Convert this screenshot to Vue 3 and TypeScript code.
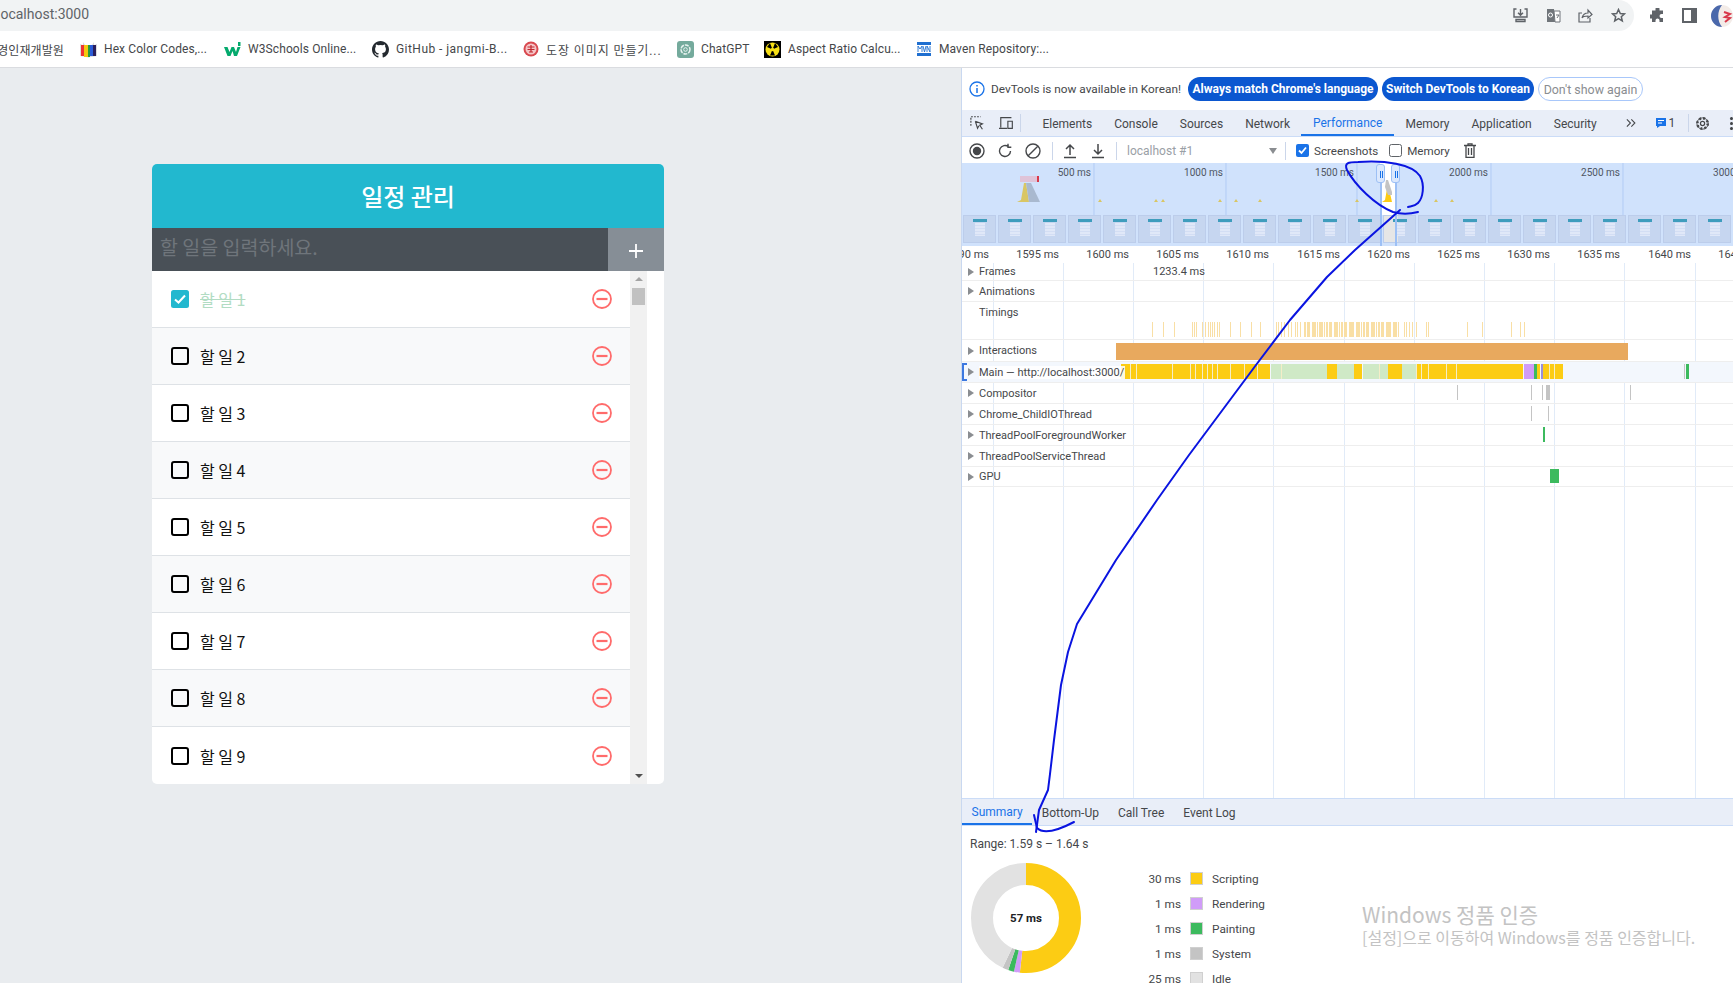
<template>
  <div class="screen">
    <header class="topbar">
      <div class="address">
        <span class="url">localhost:3000</span>
        <div class="addr-icons">
          <svg width="15" height="15" viewBox="0 0 15 15" fill="none" stroke="#5f6368" stroke-width="1.4"><path d="M3.5 1H1v8h13V1h-2.500M7.500 1v6M5 4.800l2.500 2.500L10 4.800M3 11.500h9v2H3z" /></svg>
          <svg width="15" height="15" viewBox="0 0 15 15"><path d="M1 1h7l1 13H1z" fill="#70757a" /><path d="M8 3h6v11H9z" fill="#fff" stroke="#70757a" /><circle cx="4.500" cy="7" r="2" fill="none" stroke="#fff" /><path d="M10 7h3M11 10l2-3" stroke="#70757a" /></svg>
          <svg width="15" height="15" viewBox="0 0 15 15" fill="none" stroke="#5f6368" stroke-width="1.200"><path d="M4 10c1-4 4-5 6-5V2l4 4.500L10 10V8c-3 0-5 0-6 2zM12 10v4H1V5h3" /></svg>
          <svg width="15" height="15" viewBox="0 0 15 15" fill="none" stroke="#5f6368" stroke-width="1.500"><path d="M7.500 1.500l1.800 4 4.200.4-3.200 2.800 1 4.300-3.800-2.300-3.800 2.300 1-4.300L1.500 5.900l4.200-.4z" /></svg>
        </div>
      </div>
      <div class="chrome-icons">
        <svg width="15" height="15" viewBox="0 0 15 15"><path d="M5.500 1a2 2 0 0 1 4 0v1.500H13V6h-1.500a2 2 0 0 0 0 4H13v4H9.500v-1.500a2 2 0 0 0-4 0V14H2v-3.500H.500a2 2 0 0 1 0-4H2v-4h3.500z" fill="#5f6368" /></svg>
        <svg width="15" height="15" viewBox="0 0 15 15" fill="none"><path d="M1 1h13v13H1z" stroke="#5f6368" stroke-width="2" /><path d="M9 1h5v13H9z" fill="#5f6368" /></svg>
        <svg class="avatar" width="22" height="22" viewBox="0 0 22 22"><circle cx="11" cy="11" r="11" fill="#f3ece8" /><path d="M11 0A11 11 0 0 0 11 22C6 16 6 6 11 0z" fill="#4a68ab" /><path d="M13 7l6 2-5 3 5 1-5 4" fill="none" stroke="#d8384a" stroke-width="2" /></svg>
      </div>
    </header>

    <nav class="bookmarks">
      <span class="bm bm-first">경인재개발원</span>
      <span v-for="b in bookmarks" :key="b.name" class="bm" :style="{ width: b.width + 'px' }">
        <svg v-if="b.icon === 'hex'" width="17" height="17" viewBox="0 0 17 17"><path d="M0 3l3 1V1l2 3h7l2-3v3l3-1v12l-8.500 1.500L0 15z" fill="#ddd" /><path d="M1 4h3v11H1z" fill="#e33" /><path d="M4 4h4v12H4z" fill="#f6c90e" /><path d="M8 4h2v12H8z" fill="#2a9d3d" /><path d="M10 4h3v11h-3z" fill="#2b5cd8" /><path d="M13 4h3v11h-3z" fill="#2a1e5c" /></svg>
        <svg v-else-if="b.icon === 'w3'" width="17" height="17" viewBox="0 0 17 17"><path d="M0 6h3.500l2 5 2-5h2.500l2 5 1.500-5h3l-3.500 9h-3L8.500 10 6.500 15h-3z" fill="#04aa6d" /><path d="M14 1h2.500v4H14z" fill="#04aa6d" /></svg>
        <svg v-else-if="b.icon === 'gh'" width="17" height="17" viewBox="0 0 16 16"><path fill="#24292f" d="M8 0C3.600 0 0 3.600 0 8c0 3.500 2.300 6.500 5.500 7.600.4.100.5-.2.500-.4v-1.400c-2.200.5-2.700-1-2.700-1-.4-.9-.9-1.200-.9-1.200-.7-.5.100-.5.100-.5.800.100 1.200.8 1.200.8.700 1.200 1.900.9 2.300.7.100-.5.300-.9.500-1.100-1.800-.2-3.600-.9-3.600-4 0-.9.300-1.600.8-2.100-.1-.2-.4-1 .1-2.100 0 0 .7-.2 2.200.8a7.600 7.600 0 0 1 4 0c1.500-1 2.200-.8 2.200-.8.400 1.100.2 1.900.1 2.100.5.600.8 1.300.8 2.100 0 3.100-1.900 3.700-3.700 3.900.3.300.6.700.6 1.500v2.200c0 .2.100.5.600.4A8 8 0 0 0 16 8c0-4.400-3.600-8-8-8z" /></svg>
        <svg v-else-if="b.icon === 'stamp'" width="16" height="16" viewBox="0 0 16 16"><circle cx="8" cy="8" r="7.500" fill="#d9494f" /><circle cx="8" cy="8" r="5.500" fill="#f5c6c8" /><path d="M4.500 6h7M4.500 8.500h7M6 11h4M8 4v7" stroke="#c0272d" stroke-width="1.200" /></svg>
        <svg v-else-if="b.icon === 'gpt'" width="17" height="17" viewBox="0 0 17 17"><rect width="17" height="17" rx="3" fill="#74aa9c" /><circle cx="8.500" cy="8.500" r="4.500" fill="none" stroke="#e8f3f0" stroke-width="1.500" stroke-dasharray="4 1" /><circle cx="8.500" cy="8.500" r="1.800" fill="none" stroke="#e8f3f0" /></svg>
        <svg v-else-if="b.icon === 'aspect'" width="17" height="17" viewBox="0 0 17 17"><rect width="17" height="17" fill="#000" /><circle cx="8.500" cy="8.500" r="7" fill="#f7e016" /><path d="M8.500 8.500L3 6l3-4zM8.500 8.500L14 6l-3-4zM8.500 8.500l-2.500 6h5z" fill="#000" /><circle cx="8.500" cy="8.500" r="1.800" fill="#f7e016" /></svg>
        <svg v-else width="16" height="16" viewBox="0 0 16 16"><path d="M1 1h14v3H1zM1 12h14v3H1z" fill="#1f6fd0" /><path d="M2 11V5l2 3 2-3v6M7 5l1.500 6L10 5M11 11V5l3 6V5" fill="none" stroke="#1f6fd0" stroke-width=".9" /></svg>
        <span class="bm-text" :class="{ loose: b.icon === 'gh', looser: b.icon === 'stamp' }">{{ b.name }}</span>
      </span>
    </nav>

    <div class="body">
      <main class="page">
        <section class="card">
          <h1 class="card-title">일정 관리</h1>
          <form class="card-form" @submit.prevent>
            <input type="text" placeholder="할 일을 입력하세요." />
            <button type="submit" aria-label="추가">
              <svg width="14" height="14" viewBox="0 0 14 14"><path d="M7 0v14M0 7h14" stroke="#fff" stroke-width="1.800" /></svg>
            </button>
          </form>
          <div class="card-list">
            <ul>
              <li v-for="(t, i) in todos" :key="t" :class="{ odd: i % 2 === 1 }">
                <svg v-if="i === 0" width="18" height="18" viewBox="0 0 18 18"><rect width="18" height="18" rx="2.500" fill="#22b8cf" /><path d="M4 9.500l3.500 3L14 5.500" fill="none" stroke="#fff" stroke-width="2" /></svg>
                <svg v-else width="18" height="18" viewBox="0 0 18 18"><rect x="1" y="1" width="16" height="16" rx="2" fill="none" stroke="#000" stroke-width="2" /></svg>
                <span class="todo-text" :class="{ done: i === 0 }">{{ t }}</span>
                <svg width="20" height="20" viewBox="0 0 20 20" fill="none" stroke="#ff6b6b"><circle cx="10" cy="10" r="9" stroke-width="1.800" /><path d="M4.500 10h11" stroke-width="2.200" /></svg>
              </li>
            </ul>
            <div class="scrollbar">
              <i class="arrow up"></i>
              <i class="thumb"></i>
              <i class="grow"></i>
              <i class="arrow down"></i>
            </div>
          </div>
        </section>
      </main>

      <aside class="devtools">
        <div class="infobar">
          <svg width="16" height="16" viewBox="0 0 16 16" fill="none"><circle cx="8" cy="8" r="7" stroke="#1a73e8" stroke-width="1.300" /><path d="M8 7v5M8 4v1.600" stroke="#1a73e8" stroke-width="1.500" /></svg>
          <span class="info-text">DevTools is now available in Korean!</span>
          <button class="pill solid p1">Always match Chrome's language</button>
          <button class="pill solid p2">Switch DevTools to Korean</button>
          <button class="pill ghost">Don't show again</button>
        </div>

        <div class="tabs">
          <svg width="16" height="16" viewBox="0 0 16 16" fill="none" stroke="#45474a" stroke-width="1.300"><path d="M1 11V1h11" stroke-dasharray="2 1.400" /><path d="M6 6l8 3-3 1.500L14 15M6 6l2.500 8 1.500-3" /></svg>
          <svg class="ic2" width="16" height="16" viewBox="0 0 16 16" fill="none" stroke="#45474a" stroke-width="1.300"><path d="M2 13V2h12M0 14h9M10 6h5v8h-5z" /></svg>
          <span class="sep tabsep"></span>
          <span v-for="t in tabs" :key="t" class="tab" :class="{ active: t === 'Performance' }">{{ t }}</span>
          <svg class="more" width="11" height="10" viewBox="0 0 11 10" fill="none" stroke="#45474a" stroke-width="1.200"><path d="M1 1l4 4-4 4M6 1l4 4-4 4" /></svg>
          <span class="issues"><svg width="10" height="12" viewBox="0 0 10 12"><path d="M0 1h10v8H4l-3 2V9H0z" fill="#1a73e8" /><path d="M2 3.500h6M2 6h4" stroke="#fff" /></svg> 1</span>
          <span class="sep gearsep"></span>
          <svg class="gear" width="17" height="17" viewBox="0 0 16 16" fill="none" stroke="#45474a"><circle cx="8" cy="8" r="2.200" stroke-width="1.300" /><circle cx="8" cy="8" r="5.500" stroke-width="2.600" stroke-dasharray="2.200 2.100" /><circle cx="8" cy="8" r="6" stroke-width="1" /></svg>
          <span class="dots"></span>
        </div>

        <div class="toolbar">
          <svg width="16" height="16" viewBox="0 0 16 16" fill="none"><circle cx="8" cy="8" r="7" stroke="#45474a" stroke-width="1.400" /><circle cx="8" cy="8" r="4.200" fill="#45474a" /></svg>
          <svg class="gap12" width="16" height="16" viewBox="0 0 16 16" fill="none" stroke="#45474a" stroke-width="1.400"><path d="M13.500 8a5.500 5.500 0 1 1-2-4.300M11 .800v3.400h3.300" /></svg>
          <svg class="gap12" width="16" height="16" viewBox="0 0 16 16" fill="none" stroke="#45474a" stroke-width="1.400"><circle cx="8" cy="8" r="7" /><path d="M3.200 12.800l9.600-9.600" /></svg>
          <span class="sep s1"></span>
          <svg class="gap12up" width="14" height="16" viewBox="0 0 14 16" fill="none" stroke="#45474a" stroke-width="1.500"><path d="M7 12V2M3 6l4-4 4 4M1 14.500h12" /></svg>
          <svg class="gap14" width="14" height="16" viewBox="0 0 14 16" fill="none" stroke="#45474a" stroke-width="1.500"><path d="M7 1v10M3 7l4 4 4-4M1 14.500h12" /></svg>
          <span class="sep s2"></span>
          <span class="target">localhost #1</span>
          <i class="target-arrow"></i>
          <span class="sep s3"></span>
          <svg class="chk" width="13" height="13" viewBox="0 0 13 13"><rect width="13" height="13" rx="2" fill="#1a73e8" /><path d="M3 6.500l2.500 2.500L10 3.500" fill="none" stroke="#fff" stroke-width="1.800" /></svg>
          <span class="chk-label">Screenshots</span>
          <svg class="chk c2" width="13" height="13" viewBox="0 0 13 13"><rect x=".500" y=".500" width="12" height="12" rx="2" fill="#fff" stroke="#5f6368" /></svg>
          <span class="chk-label">Memory</span>
          <svg class="trash" width="12" height="15" viewBox="0 0 12 15" fill="none" stroke="#45474a" stroke-width="1.300"><path d="M0 2.500h12M4 2.500V.800h4v1.700M2 2.500h8v11.800H2zM4.500 5v7M7.500 5v7" /></svg>
        </div>

        <div class="overview">
          <svg class="ov-graph" width="771" height="52" viewBox="0 0 771 52">
            <g v-for="o in ovTicks" :key="o.label">
              <path :d="`M${o.x} 0V83`" stroke="#b1cbf5" />
              <text :x="o.x - 3" y="13" text-anchor="end">{{ o.label }}</text>
            </g>
            <rect x="418" y="0" width="16" height="52" fill="#fff" />
            <path d="M58 13h17v6H58z" fill="#dfc3d8" />
            <path d="M75 13h2v6h-2z" fill="#d8384a" />
            <path d="M55 39l4-2 3-17h2l3 19z" fill="#d9c664" />
            <path d="M64 20h5l9 19H67z" fill="#a9b9cf" />
            <path d="M420 39l3-2 2-11h2l3 13z" fill="#fdcb14" />
            <path d="M423 24l1-7h2l4 12v3h-4z" fill="#c4c4c4" />
            <path v-for="b in ovBumps" :key="b" :d="`M${b - 2} 39l2-3 2 3z`" fill="#d9c664" />
          </svg>
          <div class="ov-strip">
            <div v-for="n in 22" :key="n" class="frame" :class="{ sel: n === 13 }">
              <i class="thumb-head"></i>
              <i class="thumb-body"></i>
            </div>
          </div>
          <i class="edge left"></i>
          <i class="edge right"></i>
          <span class="handle h1"></span>
          <span class="handle h2"></span>
        </div>

        <div class="ruler">
          <span v-for="r in rulerTicks" :key="r.label" class="rtick" :style="{ left: r.x + 'px' }">{{ r.label }}</span>
        </div>

        <div class="tracks">
          <i v-for="r in rulerTicks" :key="r.x" class="vline" :style="{ left: r.x + 'px' }"></i>

          <div class="track h18"><i class="tri"></i>Frames<span class="frame-time">1233.4 ms</span></div>
          <div class="track h21"><i class="tri"></i>Animations</div>
          <div class="track timings">
            Timings
            <i v-for="(m, i) in timingMarks" :key="i" class="mark tm" :style="{ left: m.x + 'px', width: m.w + 'px' }"></i>
          </div>
          <div class="track h22"><i class="tri"></i>Interactions<i class="interaction"></i></div>
          <div class="track h21 main-row">
            <i class="bracket"></i>
            <i v-for="(s, i) in mainSegments" :key="i" class="mark ms" :style="{ left: s.x + 'px', width: s.w + 'px', background: s.c }"></i>
            <i class="tri"></i><span class="main-label">Main — http://localhost:3000/</span>
          </div>
          <div class="track h21"><i class="tri"></i>Compositor
            <i v-for="s in compositor" :key="s.x" class="mark ms" :style="{ left: s.x + 'px', width: s.w + 'px', background: '#c4c4c4' }"></i>
          </div>
          <div class="track h21"><i class="tri"></i>Chrome_ChildIOThread
            <i class="mark ms tick-a"></i>
            <i class="mark ms tick-b"></i>
          </div>
          <div class="track h21"><i class="tri"></i>ThreadPoolForegroundWorker
            <i class="mark ms tick-w"></i>
          </div>
          <div class="track h21"><i class="tri"></i>ThreadPoolServiceThread</div>
          <div class="track h20"><i class="tri"></i>GPU
            <i class="mark ms tick-g"></i>
          </div>
        </div>

        <div class="bottom-tabs">
          <span v-for="t in bottomTabs" :key="t" class="btab" :class="{ active: t === 'Summary' }">{{ t }}</span>
        </div>

        <div class="summary">
          <div class="range">Range: 1.59 s – 1.64 s</div>
          <div class="summary-body">
            <div class="donut">
              <svg width="110" height="110" viewBox="0 0 110 110">
                <circle
                  v-for="s in donut"
                  :key="s.label"
                  cx="55"
                  cy="55"
                  r="44"
                  fill="none"
                  :stroke="s.color"
                  stroke-width="22"
                  :stroke-dasharray="s.dash"
                  :stroke-dashoffset="s.offset"
                  transform="rotate(-90 55 55)"
                />
              </svg>
              <b>57 ms</b>
            </div>
            <dl class="legend">
              <div v-for="s in legend" :key="s.label" class="legend-row">
                <dt>{{ s.ms }} ms</dt>
                <i :style="{ background: s.color }"></i>
                <dd>{{ s.label }}</dd>
              </div>
            </dl>
          </div>
        </div>
      </aside>
    </div>

    <div class="watermark">
      <div class="wm-title">Windows 정품 인증</div>
      <div class="wm-sub">[설정]으로 이동하여 Windows를 정품 인증합니다.</div>
    </div>

    <svg class="scribble" width="1733" height="983" viewBox="0 0 1733 983" fill="none" stroke="#0a14e0" stroke-width="2" stroke-linecap="round" stroke-linejoin="round">
      <path d="M1418 212C1410 214 1400 214 1393 212C1375 205 1355 185 1347 170C1344 163 1348 162 1358 162C1385 160 1412 164 1420 176C1425 185 1423 198 1418 203C1415 206 1412 206 1408 207" />
      <path d="M1400 210L1355 250L1327 277L1290 320L1256 365L1224 408L1189 455L1157 500L1116 560L1077 624L1068 652L1061 685L1054 740L1050 774L1048 790L1039 810L1036 832" />
      <path d="M1034 815L1037 828C1043 834 1055 832 1074 822" />
    </svg>
  </div>
</template>

<script setup lang="ts">
interface Bookmark {
  name: string
  icon: string
  width: number
}

interface Slice {
  label: string
  ms: number
  color: string
}

const bookmarks: Bookmark[] = [
  { name: 'Hex Color Codes,...', icon: 'hex', width: 144 },
  { name: 'W3Schools Online...', icon: 'w3', width: 148 },
  { name: 'GitHub - jangmi-B...', icon: 'gh', width: 151 },
  { name: '도장 이미지 만들기...', icon: 'stamp', width: 154 },
  { name: 'ChatGPT', icon: 'gpt', width: 87 },
  { name: 'Aspect Ratio Calcu...', icon: 'aspect', width: 152 },
  { name: 'Maven Repository:...', icon: 'mvn', width: 140 }
]

const todos = Array.from({ length: 9 }, (_, i) => `할 일 ${i + 1}`)

const tabs = ['Elements', 'Console', 'Sources', 'Network', 'Performance', 'Memory', 'Application', 'Security']
const bottomTabs = ['Summary', 'Bottom-Up', 'Call Tree', 'Event Log']

const ovTicks = [
  { x: 132, label: '500 ms' },
  { x: 264, label: '1000 ms' },
  { x: 395, label: '1500 ms' },
  { x: 529, label: '2000 ms' },
  { x: 661, label: '2500 ms' },
  { x: 793, label: '3000 ms' }
]
const ovBumps = [138, 194, 201, 258, 274, 298, 395, 474, 490]

const rulerTicks = Array.from({ length: 12 }, (_, i) => ({
  x: Math.round(30.5 + i * 70.2),
  label: `${1590 + i * 5} ms`
}))

// zoomed reference coordinates -> px inside the devtools pane
const zx = (v: number) => Math.round(v / 2.028 - 2)

const singleTimings = [
  389, 412, 433, 471, 474, 478, 490, 497, 503, 507, 511, 515, 522, 526, 548, 568, 590, 609, 641, 645, 650, 658, 665, 672, 680, 684, 690
]
const timingMarks = singleTimings.map((x) => ({ x: zx(x), w: 1 }))
// the dense stretch in the middle of the track
for (let x = 698; x < 890; x += 5) {
  timingMarks.push({ x: zx(x), w: x % 3 === 0 ? 1 : 2 })
}
for (const x of [900, 905, 910, 916, 924, 945, 950, 1028, 1058, 1118, 1135, 1143]) {
  timingMarks.push({ x: zx(x), w: 1 })
}

const yellow = '#fccc14'
const pale = '#cfe9c6'
const mainSegments = [
  [327, 630, yellow], [630, 745, pale], [745, 765, yellow], [765, 800, pale], [800, 817, yellow], [817, 868, pale],
  [868, 897, yellow], [897, 925, pale], [925, 1143, yellow], [1143, 1165, '#d09cf8'], [1165, 1171, '#3cba5e'],
  [1171, 1178, yellow], [1178, 1183, '#9a8fd8'], [1183, 1223, yellow], [1468, 1471, '#c4c4c4'], [1472, 1478, '#3cba5e']
].map(([a, b, c]) => ({ x: zx(a as number), w: ((b as number) - (a as number)) / 2.028, c: c as string }))
  .concat(
    [345, 356, 430, 466, 476, 490, 500, 512, 522, 548, 575, 602, 650, 850, 925, 935, 950, 985, 1005, 1195, 1205].map((v) => ({
      x: zx(v),
      w: 1,
      c: '#f5edc8'
    }))
  )

const compositor = [
  { x: 495, w: 1 },
  { x: 569, w: 1 },
  { x: 580, w: 1 },
  { x: 584, w: 4 },
  { x: 668, w: 1 }
]

const legend: Slice[] = [
  { label: 'Scripting', ms: 30, color: '#fccc14' },
  { label: 'Rendering', ms: 1, color: '#d09cf8' },
  { label: 'Painting', ms: 1, color: '#3cba5e' },
  { label: 'System', ms: 1, color: '#c4c4c4' },
  { label: 'Idle', ms: 25, color: '#e2e2e2' }
]

const circumference = 2 * Math.PI * 44
const totalMs = legend.reduce((sum, s) => sum + s.ms, 0)
let used = 0
const donut = legend.map((s) => {
  const len = (s.ms / totalMs) * circumference
  const slice = { ...s, dash: `${len} ${circumference - len}`, offset: -used }
  used += len
  return slice
})
</script>

<style scoped>
.screen {
  position: relative;
  width: 1733px;
  height: 983px;
  overflow: hidden;
  display: flex;
  flex-direction: column;
  background: #fff;
  font-family: Roboto, "Noto Sans CJK KR", sans-serif;
}

.topbar {
  display: flex;
  height: 31px;
  flex: none;
}

.address {
  width: 1635px;
  display: flex;
  align-items: center;
  justify-content: space-between;
  background: #f1f3f4;
  border-radius: 0 16px 16px 0;
  padding: 0 8.500px 0 0;
  box-sizing: border-box;
}

.url {
  margin: -4px 0 0 -3px;
  font-size: 14px;
  color: #5f6368;
}

.addr-icons {
  display: flex;
  gap: 17.500px;
}

.chrome-icons {
  flex: 1;
  display: flex;
  align-items: center;
  padding-left: 16px;
  gap: 17px;
}

.avatar {
  margin-left: -3px;
}

.bookmarks {
  height: 37px;
  flex: none;
  display: flex;
  align-items: center;
  border-bottom: 1px solid #dadce0;
  box-sizing: border-box;
  background: #fff;
  white-space: nowrap;
}

.bm {
  display: flex;
  align-items: center;
  gap: 7px;
  font-size: 12px;
  letter-spacing: 0.1px;
  color: #45474a;
  flex: none;
  box-sizing: border-box;
}

.bm-first {
  width: 80px;
  padding-right: 16px;
  justify-content: flex-end;
  font-family: "Noto Sans CJK KR", sans-serif;
}

.bm-text {
  font-family: Roboto, "Noto Sans CJK KR", sans-serif;
}

.bm-text.loose {
  letter-spacing: 0.45px;
}

.bm-text.looser {
  letter-spacing: 0.9px;
}

.body {
  flex: 1;
  display: flex;
  min-height: 0;
}

.page {
  width: 961px;
  flex: none;
  background: #e9ecef;
  padding: 96px 0 0 152px;
  box-sizing: border-box;
}

.card {
  width: 512px;
  background: #fff;
  border-radius: 5px;
  overflow: hidden;
  font-family: "Noto Sans CJK KR", sans-serif;
}

.card-title {
  margin: 0;
  height: 64px;
  line-height: 64px;
  text-align: center;
  background: #22b8cf;
  color: #fff;
  font-size: 24px;
  font-weight: 500;
}

.card-form {
  display: flex;
  height: 43px;
  background: #495057;
}

.card-form input {
  flex: 1;
  min-width: 0;
  border: none;
  outline: none;
  background: transparent;
  padding: 0 8px 6px;
  font-family: inherit;
  font-size: 19.500px;
  color: #fff;
}

.card-form input::placeholder {
  color: #6f757b;
}

.card-form button {
  width: 56px;
  border: none;
  background: #868e96;
  display: flex;
  align-items: center;
  justify-content: center;
  padding: 2px 0 0;
}

.card-list {
  display: flex;
  height: 513px;
  padding-right: 17px;
}

.card-list ul {
  flex: 1;
  margin: 0;
  padding: 0;
  list-style: none;
}

.card-list li {
  height: 57px;
  box-sizing: border-box;
  display: flex;
  align-items: center;
  padding: 0 18px 0 19px;
  border-bottom: 1px solid #dee2e6;
  gap: 11px;
  font-size: 16px;
  color: #111;
}

.card-list li:last-child {
  border-bottom: none;
}

.card-list li.odd {
  background: #f8f9fa;
}

.todo-text {
  flex: 1;
}

.todo-text.done {
  color: #b2dcc3;
  text-decoration: line-through;
}

.scrollbar {
  width: 17px;
  background: #f1f1f1;
  display: flex;
  flex-direction: column;
  align-items: center;
}

.arrow {
  width: 0;
  height: 0;
  border-left: 4px solid transparent;
  border-right: 4px solid transparent;
  margin: 6px 0;
}

.arrow.up {
  border-bottom: 4px solid #a3a3a3;
}

.arrow.down {
  border-top: 4px solid #505050;
}

.thumb {
  width: 13px;
  height: 17px;
  margin-top: 1px;
  background: #c1c1c1;
}

.grow {
  flex: 1;
}

.devtools {
  flex: 1;
  min-width: 0;
  display: flex;
  flex-direction: column;
  border-left: 1px solid #c9d8f0;
  font-size: 11.500px;
  color: #45474a;
}

.infobar {
  height: 42px;
  flex: none;
  display: flex;
  align-items: center;
  padding-left: 7px;
  box-sizing: border-box;
}

.info-text {
  margin-left: 6px;
  width: 197px;
  white-space: nowrap;
  font-size: 11.800px;
}

.pill {
  height: 24px;
  border-radius: 12px;
  padding: 0;
  font-family: inherit;
  font-size: 12px;
  white-space: nowrap;
}

.pill.solid {
  background: #0b57d0;
  border: none;
  color: #fff;
  font-weight: 700;
}

.p1 {
  width: 190px;
}

.p2 {
  width: 152px;
  margin-left: 4px;
}

.pill.ghost {
  width: 105px;
  margin-left: 4px;
  background: #fff;
  border: 1px solid #a8c7fa;
  color: #8a8d91;
  font-size: 12.400px;
}

.tabs {
  height: 27px;
  flex: none;
  display: flex;
  align-items: center;
  padding-left: 8px;
  background: #e9eef8;
  border-bottom: 1px solid #cbdcf7;
  box-sizing: border-box;
  white-space: nowrap;
  font-size: 12px;
}

.ic2 {
  margin-left: 15px;
}

.sep {
  width: 1px;
  height: 18px;
  background: #cbd6ea;
  flex: none;
}

.tabsep {
  margin: 0 10px 0 7px;
}

.tab {
  height: 100%;
  display: flex;
  align-items: center;
  padding: 2px 11px 0;
  box-sizing: border-box;
  color: #45474a;
}

.tab.active {
  color: #1a73e8;
  border-bottom: 2px solid #1a73e8;
  padding: 1px 12px 0;
}

.more {
  margin-left: 18px;
}

.issues {
  margin-left: 20px;
  display: flex;
  align-items: center;
  gap: 3px;
}

.gearsep {
  margin-left: 13px;
}

.gear {
  margin-left: 6px;
}

.dots {
  width: 3px;
  height: 3px;
  margin-left: 20px;
  background: #45474a;
  box-shadow: 0 -5px #45474a, 0 5px #45474a;
  border-radius: 50%;
}

.toolbar {
  height: 26px;
  flex: none;
  display: flex;
  align-items: center;
  padding: 1px 0 0 7px;
  box-sizing: border-box;
  white-space: nowrap;
  font-size: 12px;
}

.gap12 {
  margin-left: 12px;
}

.gap12up {
  margin-left: 10px;
}

.gap14 {
  margin-left: 14px;
}

.s1 {
  margin-left: 11px;
}

.s2 {
  margin-left: 11px;
}

.target {
  margin-left: 10px;
  width: 142px;
  color: #9aa0a6;
}

.target-arrow {
  width: 0;
  height: 0;
  border-left: 4px solid transparent;
  border-right: 4px solid transparent;
  border-top: 6px solid #8a8d91;
}

.s3 {
  margin-left: 8px;
}

.chk {
  margin-left: 10px;
}

.c2 {
  margin-left: 11px;
}

.chk-label {
  margin-left: 5px;
  font-size: 11.600px;
  color: #45474a;
}

.trash {
  margin-left: 14px;
}

.overview {
  position: relative;
  height: 83px;
  flex: none;
  background: #d0e2fc;
}

.ov-graph {
  display: block;
  overflow: hidden;
}

.ov-graph text {
  font-size: 10px;
  fill: #4f5663;
  font-family: Roboto, sans-serif;
}

.ov-strip {
  display: flex;
  gap: 2px;
  padding-left: 1px;
  height: 28px;
}

.frame {
  width: 33px;
  flex: none;
  height: 28px;
  background: #c6d6f0;
  border: 1px solid #bccdeb;
  box-sizing: border-box;
  display: flex;
  flex-direction: column;
  align-items: center;
  padding-top: 3px;
}

.frame.sel {
  background: linear-gradient(90deg, #e6e6e6 0 14px, #c6d6f0 14px);
}

.thumb-head {
  width: 14px;
  height: 3px;
  background: #3f9dbd;
}

.thumb-body {
  width: 10px;
  height: 13px;
  margin-top: 1px;
  background: repeating-linear-gradient(#e0e8f8 0 2px, #d3def4 2px 3px);
}

.edge {
  position: absolute;
  top: 20px;
  bottom: 0;
  width: 2px;
  background: #9dc0f5;
}

.edge.left {
  left: 418px;
}

.edge.right {
  left: 433px;
}

.handle {
  position: absolute;
  top: 1px;
  width: 9px;
  height: 19px;
  border: 1px solid #9dc0f5;
  border-radius: 3px;
  background: #dbe8fd linear-gradient(90deg, #1a73e8, #1a73e8) no-repeat;
  background-size: 1px 7px;
  background-position: 3px 6px;
  box-sizing: border-box;
}

.handle::after {
  content: "";
  position: absolute;
  left: 5px;
  top: 6px;
  width: 1px;
  height: 7px;
  background: #1a73e8;
}

.h1 {
  left: 414px;
}

.h2 {
  left: 429px;
}

.ruler {
  position: relative;
  height: 17px;
  flex: none;
  overflow: hidden;
}

.rtick {
  position: absolute;
  top: 2px;
  transform: translateX(-100%);
  padding-right: 4px;
  white-space: nowrap;
  font-size: 11px;
}

.tracks {
  position: relative;
  flex: 1;
  min-height: 0;
  border-bottom: 1px solid #cbdcf7;
  overflow: hidden;
}

.vline {
  position: absolute;
  top: 0;
  bottom: 0;
  width: 1px;
  background: #e1ebf8;
}

.track {
  position: relative;
  display: flex;
  align-items: center;
  padding-left: 17px;
  border-bottom: 1px solid #eeeeee;
  box-sizing: border-box;
  white-space: nowrap;
  font-size: 11px;
}

.h18 {
  height: 18px;
}

.h20 {
  height: 20px;
}

.h21 {
  height: 21px;
}

.h22 {
  height: 22px;
}

.timings {
  height: 38px;
  align-items: flex-start;
  padding-top: 4px;
}

.tri {
  position: absolute;
  left: 6px;
  top: 50%;
  margin-top: -4px;
  width: 0;
  height: 0;
  border-top: 4px solid transparent;
  border-bottom: 4px solid transparent;
  border-left: 6px solid #8a8d91;
}

.frame-time {
  position: absolute;
  left: 191px;
  top: 2px;
}

.mark {
  position: absolute;
  display: block;
}

.tm {
  top: 20px;
  height: 15px;
  background: #f9dfa5;
}

.ms {
  top: 2px;
  bottom: 3px;
}

.tick-a,
.tick-b {
  width: 1px;
  background: #c4c4c4;
}

.tick-a {
  left: 569px;
}

.tick-b {
  left: 586px;
}

.tick-w {
  left: 581px;
  width: 2px;
  background: #3cba5e;
}

.tick-g {
  left: 588px;
  width: 9px;
  background: #3cba5e;
}

.interaction {
  position: absolute;
  left: 154px;
  width: 512px;
  top: 3px;
  height: 17px;
  background: #e8a95e;
}

.main-row {
  background: #f3f7fd;
}

.main-row .tri,
.main-label {
  z-index: 1;
}

.main-label {
  background: rgba(255, 255, 255, 0.85);
  padding-right: 1px;
  position: relative;
}

.bracket {
  position: absolute;
  left: 0;
  top: 1px;
  bottom: 1px;
  width: 5px;
  border: 2px solid #3b78e0;
  border-right: none;
  box-sizing: border-box;
}

.bottom-tabs {
  height: 27px;
  flex: none;
  display: flex;
  background: #e9eef8;
  border-bottom: 1px solid #cbdcf7;
  box-sizing: border-box;
  font-size: 12px;
}

.btab {
  display: flex;
  align-items: center;
  padding: 2px 9.500px 0;
  box-sizing: border-box;
  color: #45474a;
}

.btab.active {
  color: #1a73e8;
  border-bottom: 2px solid #1a73e8;
}

.summary {
  height: 157px;
  flex: none;
  overflow: hidden;
}

.range {
  margin: 10px 0 0 8px;
  line-height: 16px;
  font-size: 12px;
}

.summary-body {
  display: flex;
  margin-top: 11px;
  padding-left: 9px;
}

.donut {
  position: relative;
  width: 110px;
  height: 110px;
  flex: none;
}

.donut svg {
  display: block;
}

.donut b {
  position: absolute;
  inset: 0;
  display: flex;
  align-items: center;
  justify-content: center;
  color: #202124;
}

.legend {
  margin: 3px 0 0 59px;
  flex: none;
  font-size: 11.800px;
}

.legend-row {
  display: flex;
  align-items: center;
  height: 25px;
}

.legend-row dt {
  width: 41px;
  text-align: right;
}

.legend-row i {
  width: 13px;
  height: 13px;
  margin-left: 9px;
  box-sizing: border-box;
  outline: 1px solid #d0d0d0;
  outline-offset: -1px;
}

.legend-row dd {
  margin: 0 0 0 9px;
}

.watermark {
  position: absolute;
  left: 1362px;
  top: 901px;
  color: #c3c3c3;
  font-family: "Noto Sans CJK KR", sans-serif;
  white-space: nowrap;
}

.wm-title {
  font-size: 21px;
  line-height: 26px;
}

.wm-sub {
  font-size: 16px;
  line-height: 20px;
}

.scribble {
  position: absolute;
  left: 0;
  top: 0;
  pointer-events: none;
}
</style>

<style>
html,
body {
  margin: 0;
  overflow: hidden;
}
</style>
